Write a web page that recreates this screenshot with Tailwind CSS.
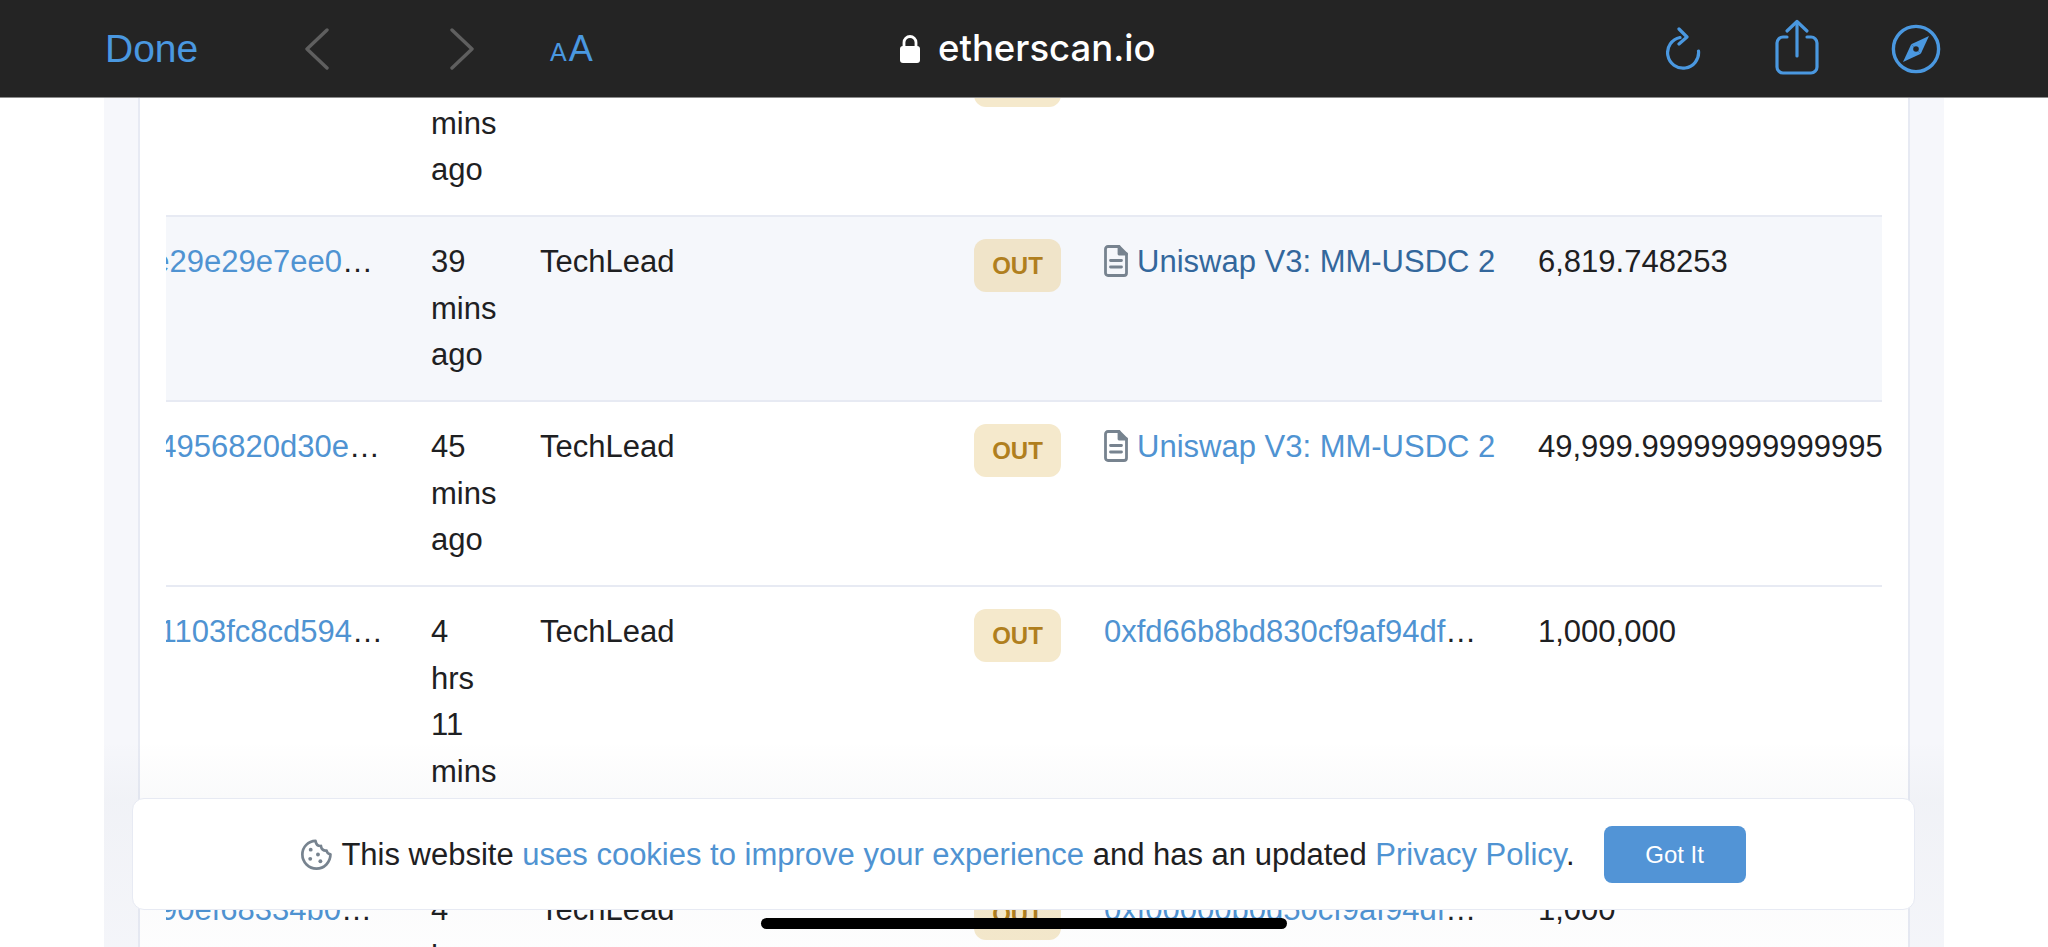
<!DOCTYPE html>
<html lang="en">
<head>
  <meta charset="UTF-8" />
  <title>etherscan.io</title>
  <script src="https://cdn.jsdelivr.net/npm/@tailwindcss/browser@4"></script>
</head>
<body class="bg-white font-['Liberation_Sans',sans-serif] text-[31px] leading-[46.5px] text-[#1e2022]">
  <div class="relative h-[947px] w-[2048px] overflow-hidden">

    <!-- safari view controller bar -->
    <header class="absolute inset-x-0 top-0 z-20 flex h-[98px] items-center border-b border-[#8c8c8c] bg-[#242424] pl-[105px] text-[#4a98e0]">
      <span class="w-[199px] text-[39px] leading-none">Done</span>
      <svg class="h-[42px] w-[26px]" viewBox="0 0 26 42" fill="none" stroke="#5f5f5f" stroke-width="3.4" stroke-linecap="round" stroke-linejoin="round"><path d="M23 2 L3 21 L23 40"/></svg>
      <svg class="ml-[119px] h-[42px] w-[26px]" viewBox="0 0 26 42" fill="none" stroke="#5f5f5f" stroke-width="3.4" stroke-linecap="round" stroke-linejoin="round"><path d="M3 2 L23 21 L3 40"/></svg>
      <span class="ml-[75px] flex w-[44px] items-baseline leading-none"><span class="text-[25px]">A</span><span class="ml-[2px] text-[36px]">A</span></span>
      <svg class="ml-[306px] h-[28px] w-[20px]" viewBox="0 0 20 28" fill="#fff"><path d="M4 12V7.5a6 6 0 0 1 12 0V12" fill="none" stroke="#fff" stroke-width="2.8"/><rect x="0" y="11" width="20" height="17" rx="3"/></svg>
      <span class="ml-[18px] w-[728px] font-['Inter'] text-[36.5px] font-medium leading-none text-white">etherscan.io</span>
      <svg class="h-[44px] w-[36px]" viewBox="0 0 36 44" fill="none" stroke="#4a98e0" stroke-width="3.2" stroke-linecap="round" stroke-linejoin="round"><path d="M14 10.5 A15.5 15.5 0 1 0 32.5 24"/><path d="M13 2 L21 10 L13 17"/></svg>
      <svg class="-mt-[3px] ml-[73px] h-[56px] w-[44px]" viewBox="0 0 44 56" fill="none" stroke="#4a98e0" stroke-width="3.2" stroke-linecap="round" stroke-linejoin="round"><path d="M12 18 H8 a6 6 0 0 0 -6 6 V48 a6 6 0 0 0 6 6 H36 a6 6 0 0 0 6 -6 V24 a6 6 0 0 0 -6 -6 H32"/><path d="M22 37 V3"/><path d="M12 12 L22 2.5 L32 12"/></svg>
      <svg class="ml-[72px] h-[50px] w-[50px]" viewBox="0 0 50 50" fill="none"><circle cx="25" cy="25" r="22.6" stroke="#4a98e0" stroke-width="3.4"/><path d="M38 12 L29.8 29.8 L20.2 20.2 Z" fill="#4a98e0"/><path d="M12 38 L20.2 20.2 L29.8 29.8 Z" fill="#4a98e0"/><circle cx="25" cy="25" r="2.8" fill="#242424"/></svg>
    </header>

    <!-- page -->
    <main class="mx-[104px] min-h-full bg-[#f6f7fb] px-[34px] pt-[32px]">
      <div class="min-h-[915px] border-x-2 border-[#e7eaf3] bg-white pl-[26px] pr-[26px]">
        <div class="overflow-hidden">

          <div class="grid grid-cols-[265px_109px_434px_130px_434px_344px] border-b-2 border-[#e7eaf3] pb-[21.5px] pt-[22px]">
            <div class="flex justify-end overflow-hidden pr-[55px] whitespace-nowrap"><span class="text-[#4f93d2]">0x8d2a07c41b6ee5f3</span><span>…</span></div>
            <div class="w-min">36 mins ago</div>
            <div>TechLead</div>
            <div><span class="flex h-[53px] w-[87px] items-center justify-center rounded-xl bg-[#f5e9cc] pt-[2px] text-[24px] font-bold text-[#b07f1e]">OUT</span></div>
            <div></div>
            <div></div>
          </div>

          <div class="grid grid-cols-[265px_109px_434px_130px_434px_344px] border-b-2 border-[#e7eaf3] bg-[#f5f7fb] pb-[21.5px] pt-[22px]">
            <div class="flex justify-end overflow-hidden pr-[58px] whitespace-nowrap"><span class="text-[#4f93d2]">0xb73e29e29e7ee0</span><span>…</span></div>
            <div class="w-min">39 mins ago</div>
            <div>TechLead</div>
            <div><span class="flex h-[53px] w-[87px] items-center justify-center rounded-xl bg-[#f0e4c9] pt-[2px] text-[24px] font-bold text-[#b07f1e]">OUT</span></div>
            <div class="flex items-start gap-[9px] whitespace-nowrap text-[#33679c]">
              <svg class="mt-[6px] h-[32px] w-[24px] shrink-0" viewBox="0 0 24 32" fill="none" stroke="#77838f" stroke-width="2.8" stroke-linejoin="round" stroke-linecap="round"><path d="M4 1.5 H15 L22.5 9 V28 a2.5 2.5 0 0 1 -2.5 2.5 H4 a2.5 2.5 0 0 1 -2.5 -2.5 V4 a2.5 2.5 0 0 1 2.5 -2.5 Z"/><path d="M15 1.5 V9 H22.5" fill="#77838f"/><path d="M6.5 15.5 H17.5 M6.5 22 H17.5"/></svg>
              <span>Uniswap V3: MM-USDC 2</span>
            </div>
            <div>6,819.748253</div>
          </div>

          <div class="grid grid-cols-[265px_109px_434px_130px_434px_344px] border-b-2 border-[#e7eaf3] pb-[21.5px] pt-[22px]">
            <div class="flex justify-end overflow-hidden pr-[51px] whitespace-nowrap"><span class="text-[#4f93d2]">0xc414956820d30e</span><span>…</span></div>
            <div class="w-min">45 mins ago</div>
            <div>TechLead</div>
            <div><span class="flex h-[53px] w-[87px] items-center justify-center rounded-xl bg-[#f5e9cc] pt-[2px] text-[24px] font-bold text-[#b07f1e]">OUT</span></div>
            <div class="flex items-start gap-[9px] whitespace-nowrap text-[#4f93d2]">
              <svg class="mt-[6px] h-[32px] w-[24px] shrink-0" viewBox="0 0 24 32" fill="none" stroke="#77838f" stroke-width="2.8" stroke-linejoin="round" stroke-linecap="round"><path d="M4 1.5 H15 L22.5 9 V28 a2.5 2.5 0 0 1 -2.5 2.5 H4 a2.5 2.5 0 0 1 -2.5 -2.5 V4 a2.5 2.5 0 0 1 2.5 -2.5 Z"/><path d="M15 1.5 V9 H22.5" fill="#77838f"/><path d="M6.5 15.5 H17.5 M6.5 22 H17.5"/></svg>
              <span>Uniswap V3: MM-USDC 2</span>
            </div>
            <div class="whitespace-nowrap">49,999.99999999999995</div>
          </div>

          <div class="grid grid-cols-[265px_109px_434px_130px_434px_344px] border-b-2 border-[#e7eaf3] pb-[21.5px] pt-[22px]">
            <div class="flex justify-end overflow-hidden pr-[48px] whitespace-nowrap"><span class="text-[#4f93d2]">0xad1103fc8cd594</span><span>…</span></div>
            <div class="w-min">4 hrs 11 mins ago</div>
            <div>TechLead</div>
            <div><span class="flex h-[53px] w-[87px] items-center justify-center rounded-xl bg-[#f5e9cc] pt-[2px] text-[24px] font-bold text-[#b07f1e]">OUT</span></div>
            <div class="whitespace-nowrap"><span class="text-[#4f93d2]">0xfd66b8bd830cf9af94df</span><span>…</span></div>
            <div>1,000,000</div>
          </div>

          <div class="grid grid-cols-[265px_109px_434px_130px_434px_344px] pb-[21.5px] pt-[22px]">
            <div class="flex justify-end overflow-hidden pr-[59px] whitespace-nowrap"><span class="text-[#4f93d2]">0x790ef68334b0</span><span>…</span></div>
            <div class="w-min">4 hrs 12 mins ago</div>
            <div>TechLead</div>
            <div><span class="flex h-[53px] w-[87px] items-center justify-center rounded-xl bg-[#f5e9cc] pt-[2px] text-[24px] font-bold text-[#b07f1e]">OUT</span></div>
            <div class="whitespace-nowrap"><span class="text-[#4f93d2]">0xf00000b0d50cf9af94df</span><span>…</span></div>
            <div>1,000</div>
          </div>

        </div>
      </div>
    </main>

    <!-- soft fade behind the cookie banner -->
    <div class="pointer-events-none absolute inset-x-[104px] bottom-0 z-[5] h-[207px] bg-linear-to-b from-transparent via-[#20304f]/[.025] via-30% to-[#20304f]/[.01]"></div>

    <!-- cookie banner -->
    <div class="absolute left-[132px] top-[798px] z-10 flex h-[112px] w-[1783px] items-center justify-center rounded-xl border border-[#e7eaf3] bg-white">
      <svg class="mr-[9px] h-[31px] w-[31px]" viewBox="0 0 32 32" fill="none" stroke="#77838f" stroke-width="2.8" stroke-linejoin="round"><path d="M15 2 C15.6 5.6 18 7.4 20.6 7.2 C20.8 10.2 23.4 12.6 26.4 12 C26.8 14.2 28.2 15.4 30.4 15.8 C30.4 24 24 30.6 16 30.6 C8 30.6 1.4 24 1.4 16 C1.4 8 7.6 2.2 15 2 Z"/><g fill="#77838f" stroke="none"><circle cx="10" cy="11" r="2"/><circle cx="9.5" cy="20.5" r="2"/><circle cx="17.5" cy="16" r="2"/><circle cx="20" cy="23" r="2"/></g></svg>
      <p class="whitespace-nowrap pt-[2px]">This website <span class="text-[#4f93d2]">uses cookies to improve your experience</span> and has an updated <span class="text-[#4f93d2]">Privacy Policy</span>.</p>
      <button class="ml-[29px] h-[57px] w-[142px] rounded-lg bg-[#5294d6] pt-[2px] text-[24px] leading-none text-white">Got It</button>
    </div>

    <!-- home indicator -->
    <div class="absolute left-[761px] top-[918px] z-30 h-[11px] w-[526px] rounded-full bg-black"></div>
  </div>
</body>
</html>
